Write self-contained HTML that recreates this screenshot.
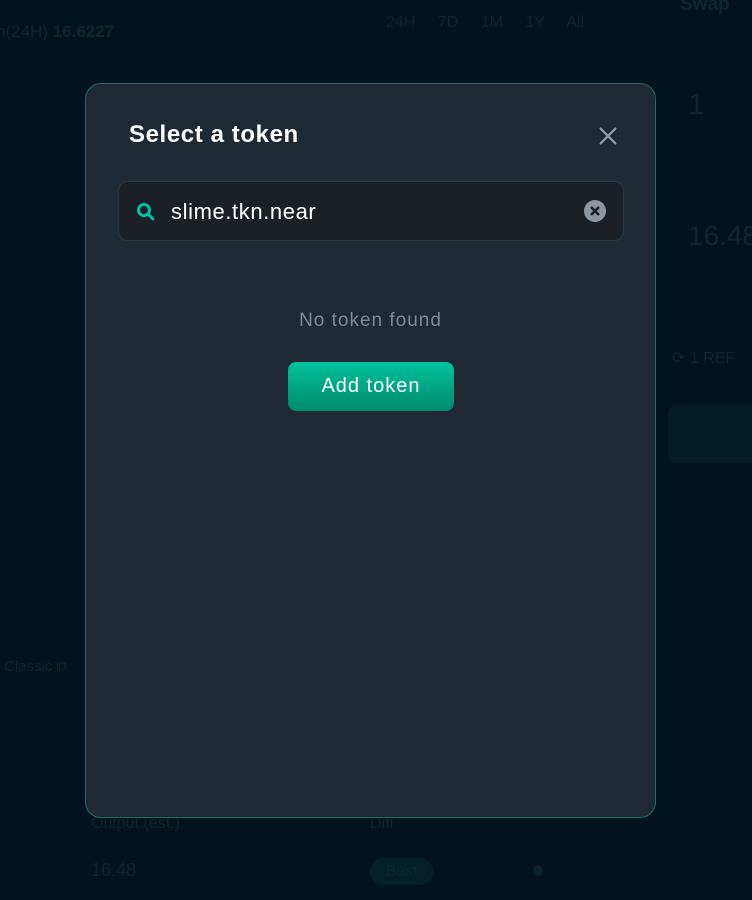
<!DOCTYPE html>
<html><head><meta charset="utf-8"><style>
*{margin:0;padding:0;box-sizing:border-box}
body{width:752px;height:900px;background:#00131f;font-family:"Liberation Sans",sans-serif;position:relative;overflow:hidden}
.bg{position:absolute;color:#0d2532}
.modal{position:absolute;left:85px;top:83px;width:571px;height:735px;background:#1e2933;border:1px solid #1c6e63;border-radius:16px}
.title{position:absolute;left:43px;top:37px;color:#fff;font-size:24px;font-weight:bold;letter-spacing:0.6px}
.close{position:absolute;left:512px;top:42px}
.search{position:absolute;left:32px;top:97px;width:506px;height:60px;background:#1b2027;border:1px solid #2a3742;border-radius:10px}
.search .txt{position:absolute;left:52px;top:17px;color:#fff;font-size:22px;letter-spacing:0.6px}
.nf{position:absolute;left:0;width:100%;top:226px;text-align:center;color:#7e8a93;font-size:19px;letter-spacing:1px}
.btn{position:absolute;left:202px;top:278px;width:166px;height:49px;border-radius:8px;background:linear-gradient(#00c39d,#008a6f);color:#fff;font-size:20px;letter-spacing:1px;text-align:center;line-height:49px}
</style></head><body>
<div class="bg" style="left:-4px;top:22px;font-size:17px">h(24H) <b>16.6227</b></div>
<div class="bg" style="left:386px;top:14px;font-size:16px;word-spacing:18px">24H 7D 1M 1Y All</div>
<div class="bg" style="left:680px;top:-6px;font-size:19px;font-weight:bold">Swap</div>
<div class="bg" style="left:688px;top:88px;font-size:30px">1</div>
<div class="bg" style="left:688px;top:220px;font-size:28px">16.48</div>
<div class="bg" style="left:672px;top:348px;font-size:16px">⟳ 1 REF</div>
<div class="bg" style="left:668px;top:405px;width:90px;height:58px;background:#031c26;border-radius:8px"></div>
<div class="bg" style="left:4px;top:658px;font-size:15px">Classic ⧉</div>
<div class="bg" style="left:91px;top:815px;font-size:16px">Output (est.)</div>
<div class="bg" style="left:370px;top:815px;font-size:16px">Diff</div>
<div class="bg" style="left:91px;top:860px;font-size:18px">16.48</div>
<div class="bg" style="left:370px;top:858px;width:63px;height:27px;background:#032029;border-radius:14px;font-size:16px;text-align:center;line-height:27px">Best</div>
<div class="bg" style="left:533px;top:865px;width:10px;height:11px;background:#07222d;border-radius:50%"></div>
<div class="modal">
<div class="title">Select a token</div>
<svg class="close" width="20" height="20" viewBox="0 0 20 20"><path d="M2 2L18 18M18 2L2 18" stroke="#9aa4ab" stroke-width="2"/></svg>
<div class="search">
<svg style="position:absolute;left:17px;top:20px" width="20" height="20" viewBox="0 0 20 20"><circle cx="8" cy="8" r="5.5" stroke="#00c39d" stroke-width="3" fill="none"/><path d="M12 12L17 17" stroke="#00c39d" stroke-width="3" stroke-linecap="round"/></svg>
<div class="txt">slime.tkn.near</div>
<svg style="position:absolute;left:465px;top:18px" width="22" height="22" viewBox="0 0 22 22"><circle cx="11" cy="11" r="11" fill="#8c969e"/><path d="M7 7L15 15M15 7L7 15" stroke="#1b2027" stroke-width="2.5"/></svg>
</div>
<div class="nf">No token found</div>
<div class="btn">Add token</div>
</div>
</body></html>
